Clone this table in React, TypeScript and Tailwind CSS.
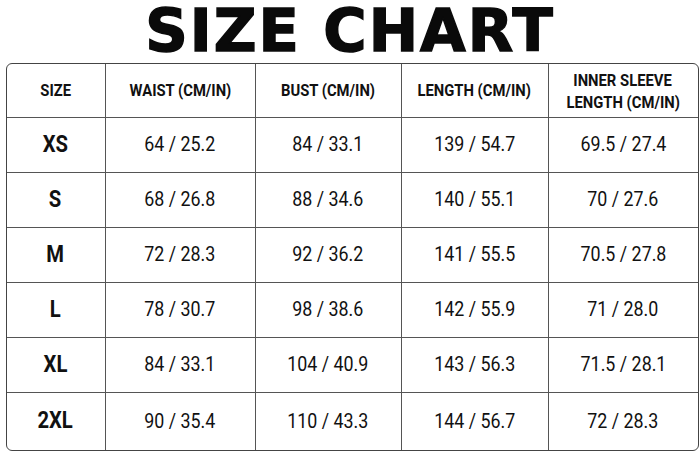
const headers = ["SIZE", "WAIST (CM/IN)", "BUST (CM/IN)", "LENGTH (CM/IN)"];

const rows = [
  ["XS", "64 / 25.2", "84 / 33.1", "139 / 54.7", "69.5 / 27.4"],
  ["S", "68 / 26.8", "88 / 34.6", "140 / 55.1", "70 / 27.6"],
  ["M", "72 / 28.3", "92 / 36.2", "141 / 55.5", "70.5 / 27.8"],
  ["L", "78 / 30.7", "98 / 38.6", "142 / 55.9", "71 / 28.0"],
  ["XL", "84 / 33.1", "104 / 40.9", "143 / 56.3", "71.5 / 28.1"],
  ["2XL", "90 / 35.4", "110 / 43.3", "144 / 56.7", "72 / 28.3"],
];

const cols = "grid-cols-[99px_150px_146px_147px_1fr]";

export default function App() {
  return (
    <div className="w-[700px] h-[456px] bg-white flex flex-col items-center overflow-hidden">
      <h1
        className="h-[62px] text-[59px] font-bold leading-[62px] tracking-[2px] text-[#0a0a0a] [-webkit-text-stroke:1.5px_#0a0a0a]"
        style={{ fontFamily: '"DejaVu Sans", sans-serif' }}
      >
        SIZE CHART
      </h1>
      <div
        className="mt-[1px] ml-[4px] w-[693px] border border-[#444] rounded-[6px] overflow-hidden text-[#111]"
        style={{ fontFamily: 'Roboto, "DejaVu Sans Condensed", sans-serif' }}
      >
        <div className={`grid ${cols} h-[54px] border-b border-[#555]`}>
          {headers.map((h) => (
            <div key={h} className="flex items-center justify-center border-r border-[#555] text-[17px] font-bold">
              <span className="inline-block scale-x-87 whitespace-nowrap">{h}</span>
            </div>
          ))}
          <div className="flex flex-col items-center justify-center text-[17px] font-bold leading-[22px]">
            <span className="inline-block scale-x-87 whitespace-nowrap">INNER SLEEVE</span>
            <span className="inline-block scale-x-87 whitespace-nowrap">LENGTH (CM/IN)</span>
          </div>
        </div>
        {rows.map((r, i) => (
          <div
            key={r[0]}
            className={`grid ${cols} ${i === rows.length - 1 ? "h-[57px]" : "h-[55px] border-b border-[#555]"}`}
          >
            {r.map((c, j) => (
              <div
                key={j}
                className={`flex items-center justify-center ${j < 4 ? "border-r border-[#555]" : ""} ${
                  j === 0 ? "text-[23px] font-bold" : "text-[21px]"
                }`}
              >
                <span className={`inline-block whitespace-nowrap ${j === 0 ? "scale-x-88" : "scale-x-85"}`}>{c}</span>
              </div>
            ))}
          </div>
        ))}
      </div>
    </div>
  );
}
